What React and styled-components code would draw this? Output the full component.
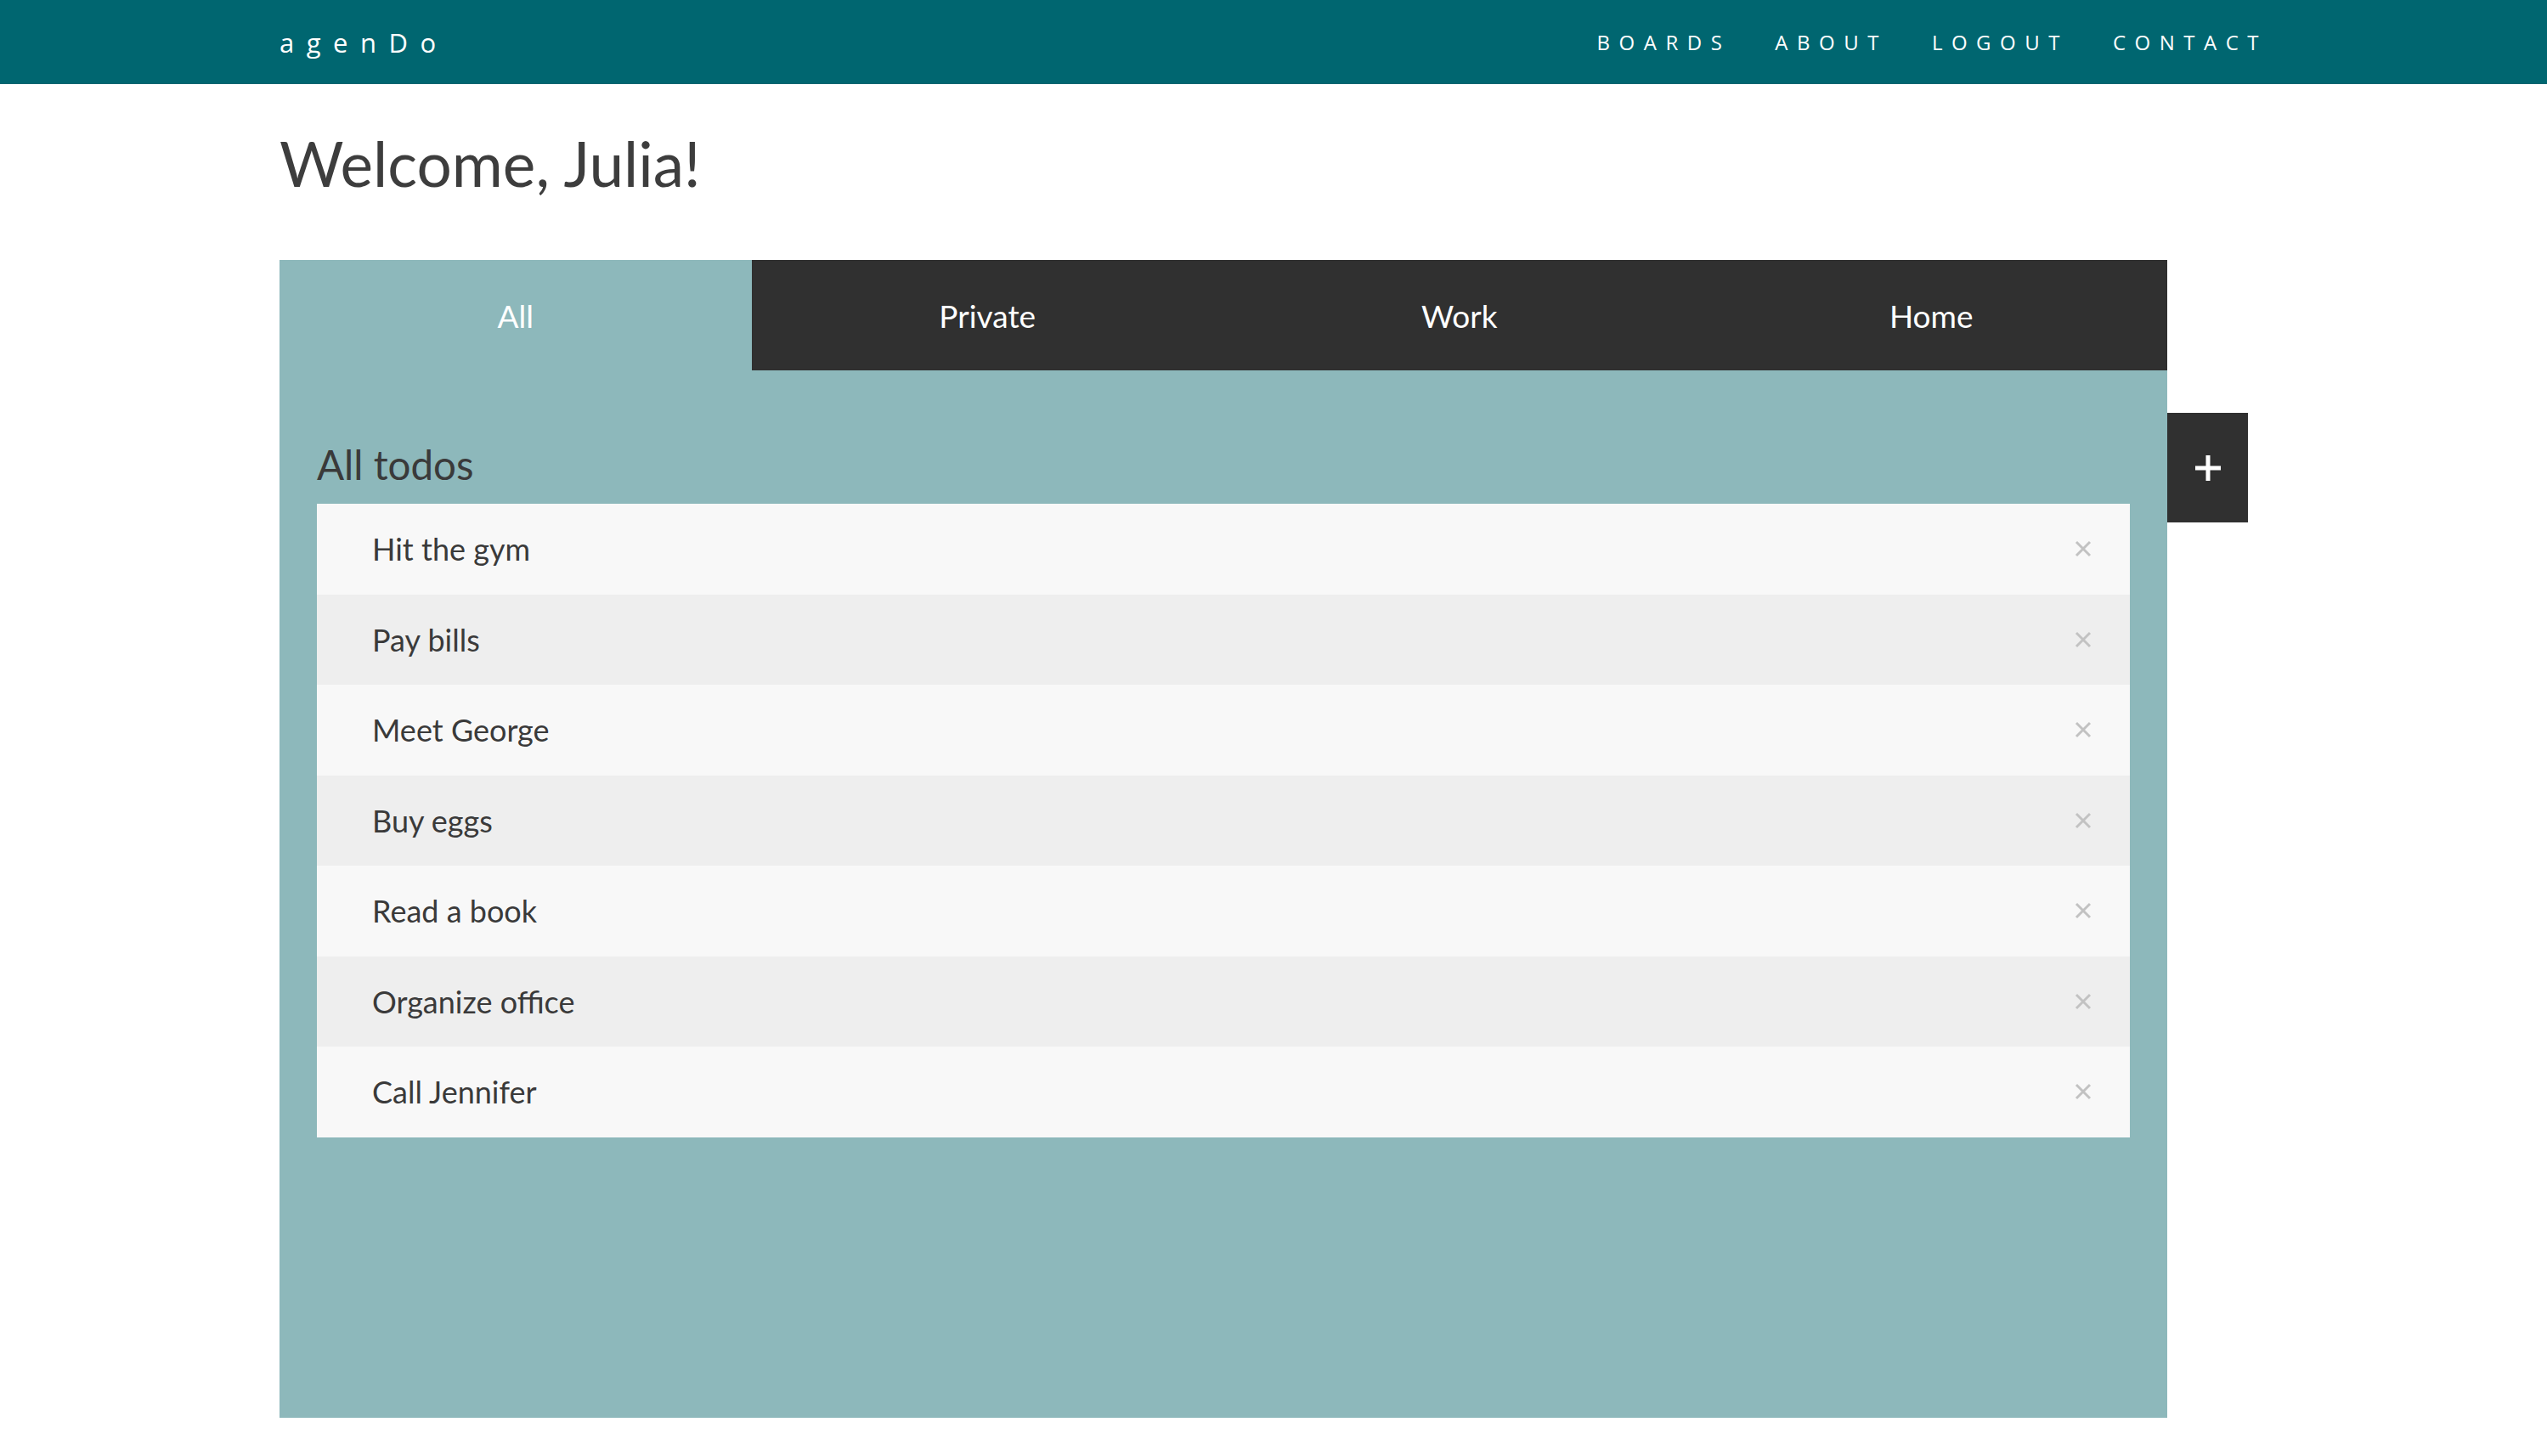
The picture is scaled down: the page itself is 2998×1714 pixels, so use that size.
import React from "react";
import styled, { createGlobalStyle } from "styled-components";

const GlobalStyle = createGlobalStyle`
  html, body {
    margin: 0;
    padding: 0;
    background: #ffffff;
    font-family: Lato, "Open Sans", sans-serif;
  }
  * { box-sizing: border-box; }
`;

const Header = styled.header`
  background: #006670;
  height: 99px;
`;

const HeaderInner = styled.div`
  width: 2340px;
  height: 100%;
  margin: 0 auto;
  display: flex;
  align-items: center;
  justify-content: space-between;
`;

const Logo = styled.a`
  font-family: "Open Sans", sans-serif;
  font-weight: 400;
  font-size: 31px;
  letter-spacing: 14.5px;
  color: #ffffff;
  text-decoration: none;
`;

const Nav = styled.nav`
  display: flex;
  align-items: center;
  gap: 52px;
`;

const NavLink = styled.a`
  font-family: "Open Sans", sans-serif;
  font-weight: 400;
  font-size: 24px;
  letter-spacing: 10.5px;
  color: #ffffff;
  text-decoration: none;
  text-transform: uppercase;
`;

const Main = styled.main`
  width: 2340px;
  margin: 0 auto;
`;

const Greeting = styled.h1`
  margin: 48px 0 69px;
  font-family: Lato, sans-serif;
  font-weight: 400;
  font-size: 73px;
  line-height: 90px;
  color: #3d3d3d;
`;

const Board = styled.section`
  position: relative;
  width: 2222px;
  background: #8db8bb;
`;

const Tabs = styled.div`
  display: grid;
  grid-template-columns: repeat(4, 1fr);
  height: 130px;
`;

const Tab = styled.button`
  border: none;
  margin: 0;
  padding: 0;
  display: flex;
  align-items: center;
  justify-content: center;
  font-family: Lato, sans-serif;
  font-size: 37px;
  color: #ffffff;
  background: ${(p) => (p.$active ? "#8db8bb" : "#303030")};
  cursor: pointer;
`;

const BoardBody = styled.div`
  padding: 81px 44px 330px;
`;

const BoardTitle = styled.h2`
  margin: 0 0 17px;
  font-family: Lato, sans-serif;
  font-weight: 400;
  font-size: 47.5px;
  line-height: 59px;
  color: #3a3a3a;
`;

const TodoList = styled.ul`
  list-style: none;
  margin: 0;
  padding: 0;
`;

const TodoRow = styled.li`
  height: 106.5px;
  display: flex;
  align-items: center;
  justify-content: space-between;
  padding: 0 45px 0 65px;
  background: ${(p) => (p.$alt ? "#eeeeee" : "#f8f8f8")};
  font-family: Lato, sans-serif;
  font-size: 36px;
  color: #3a3a3a;
`;

const RemoveButton = styled.button`
  border: none;
  background: none;
  padding: 0;
  width: 20px;
  height: 20px;
  display: flex;
  cursor: pointer;
`;

const AddButton = styled.button`
  position: absolute;
  top: 180px;
  left: 100%;
  width: 95px;
  height: 129px;
  border: none;
  padding: 0;
  background: #303030;
  display: flex;
  align-items: center;
  justify-content: center;
  cursor: pointer;
`;

const tabs = ["All", "Private", "Work", "Home"];
const todos = [
  "Hit the gym",
  "Pay bills",
  "Meet George",
  "Buy eggs",
  "Read a book",
  "Organize office",
  "Call Jennifer",
];
const links = ["Boards", "About", "Logout", "Contact"];

function CrossIcon() {
  return (
    <svg width="20" height="20" viewBox="0 0 20 20">
      <path d="M2 2 L18 18 M18 2 L2 18" stroke="#c2c2c2" strokeWidth="3" fill="none" />
    </svg>
  );
}

function PlusIcon() {
  return (
    <svg width="30" height="30" viewBox="0 0 30 30">
      <path d="M15 0 V30 M0 15 H30" stroke="#ffffff" strokeWidth="5" fill="none" />
    </svg>
  );
}

export default function App() {
  return (
    <>
      <GlobalStyle />
      <Header>
        <HeaderInner>
          <Logo href="#">agenDo</Logo>
          <Nav>
            {links.map((l) => (
              <NavLink key={l} href="#">
                {l}
              </NavLink>
            ))}
          </Nav>
        </HeaderInner>
      </Header>
      <Main>
        <Greeting>Welcome, Julia!</Greeting>
        <Board>
          <Tabs>
            {tabs.map((t, i) => (
              <Tab key={t} $active={i === 0}>
                {t}
              </Tab>
            ))}
          </Tabs>
          <BoardBody>
            <BoardTitle>All todos</BoardTitle>
            <TodoList>
              {todos.map((t, i) => (
                <TodoRow key={t} $alt={i % 2 === 1}>
                  <span>{t}</span>
                  <RemoveButton aria-label="remove">
                    <CrossIcon />
                  </RemoveButton>
                </TodoRow>
              ))}
            </TodoList>
          </BoardBody>
          <AddButton aria-label="add">
            <PlusIcon />
          </AddButton>
        </Board>
      </Main>
    </>
  );
}
